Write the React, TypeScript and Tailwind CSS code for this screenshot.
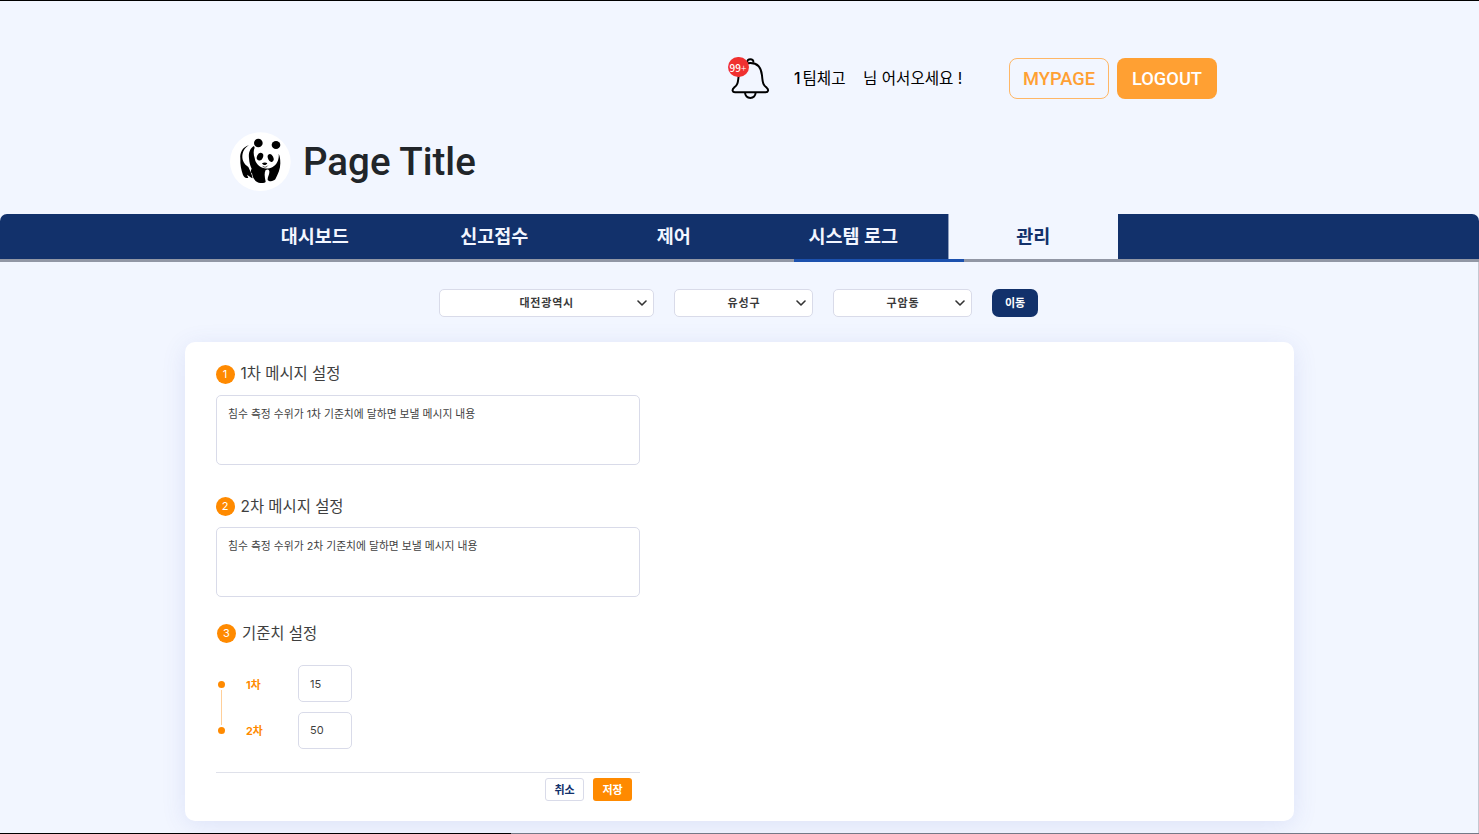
import type { ReactNode } from "react";

const KR = "font-[Inter,'Noto_Sans_CJK_KR',sans-serif]";

function Bell() {
  return (
    <div className="relative h-[44px] w-[42px]">
      <svg viewBox="84 48 126 132" className="h-[44px] w-[42px]" fill="none" stroke="#000" strokeWidth="5.8" strokeLinejoin="round">
        <path d="M142 68 C139 54 163 54 160 68" />
        <path d="M151 69 C174 69 184 85 186 106 C188 130 190 136 200 143 C207 149 205 157 197 157 H105 C97 157 95 149 102 143 C112 136 114 130 116 106 C118 85 128 69 151 69 Z" />
        <path d="M135 158 C137 179 165 179 167 158" />
      </svg>
      <span className="absolute left-0 top-px flex h-[20px] w-[21px] items-center justify-center rounded-full bg-[#f03030] font-['Noto_Sans_CJK_KR',sans-serif] text-[10px] leading-none text-white">
        <span className="relative right-[0.5px] top-px">
          <span className="font-medium">99</span>
          <span className="font-light">+</span>
        </span>
      </span>
    </div>
  );
}

function Panda() {
  return (
    <svg viewBox="30 30 186 186" className="h-[62px] w-[62px]">
      <ellipse cx="121" cy="125" rx="91" ry="88" fill="#fff" />
      <g fill="#000">
        <path d="M87 76 C68 81 59 98 61 116 C60 133 64 150 69 165 C73 174 80 175 85 174 L81 164 C87 167 93 173 98 175 C96 164 90 151 85 141 C78 137 68 128 67 112 C67 96 73 84 87 76 Z" />
        <path d="M102 78 C90 84 85 99 87 115 C88 130 91 138 95 146 C92 150 91 157 96 160 C98 172 103 184 116 188 C124 190 134 190 137 185 C134 172 132 160 137 150 C142 147 147 148 148 154 C149 164 142 171 143 180 C148 186 161 184 166 178 C174 162 181 148 181 130 C181 118 180 108 176 101 C178 118 171 134 158 141 C149 145 142 147 133 145 C118 142 106 130 104 114 C100 104 100 91 104 83 Z" />
        <ellipse cx="115" cy="69" rx="13" ry="13" />
        <ellipse cx="168" cy="75" rx="13" ry="12" />
        <ellipse cx="120" cy="110" rx="9" ry="12" transform="rotate(25 120 110)" />
        <ellipse cx="152" cy="114" rx="8" ry="12" transform="rotate(-25 152 114)" />
        <path d="M126 130 C131 127 138 127 142 130 C139 137 129 137 126 130 Z" />
      </g>
      <path d="M128 139 C134 143 140 142 143 137" stroke="#000" strokeWidth="2" fill="none" />
    </svg>
  );
}

function Select({ label, className }: { label: string; className: string }) {
  return (
    <div className={`flex h-[28px] items-center rounded-[5px] border border-[#d9dbe9] bg-white pr-[6.5px] ${className}`}>
      <span className="flex-1 pl-[17.5px] pt-px text-center text-[11px] font-bold tracking-[0.8px] text-[#3a3a3a]">{label}</span>
      <svg viewBox="0 0 10 6" className="h-[6px] w-[10px]" fill="none" stroke="#333" strokeWidth="1.6" strokeLinecap="round" strokeLinejoin="round">
        <path d="M1 1 L5 5 L9 1" />
      </svg>
    </div>
  );
}

function Heading({ n, children }: { n: number; children: ReactNode }) {
  return (
    <div className="flex h-[19px] items-center gap-[6px]">
      <span className="flex h-[19px] w-[19px] items-center justify-center rounded-full bg-[#ff8a00] text-[11px] leading-none text-white">{n}</span>
      <h2 className="whitespace-nowrap text-[15.4px] leading-[20px] text-[#3f3f3f]">{children}</h2>
    </div>
  );
}

function Message({ children }: { children: ReactNode }) {
  return (
    <div className="h-[70px] w-[424px] rounded-[5px] border border-[#d9dbe9] bg-white px-[11px] pt-[9px] text-[10.8px] leading-[19px] text-[#3f3f3f]">
      {children}
    </div>
  );
}

function Field({ children }: { children: ReactNode }) {
  return (
    <div className="flex h-[37px] w-[54px] items-center rounded-[5px] border border-[#d9dbe9] pl-[11px] pt-px text-[11px] text-[#3f3f3f]">
      {children}
    </div>
  );
}

function Tab({ label, active = false }: { label: string; active?: boolean }) {
  return (
    <a className={`flex h-[45px] w-[169.5px] items-center justify-center text-[18.5px] font-bold leading-none ${active ? "border-l border-l-[#8f9fbe] bg-[#f2f6ff] text-[#12316b]" : "text-[#f2f6ff]"}`}>
      {label}
    </a>
  );
}

export default function App() {
  return (
    <div className={`flex h-[834px] w-[1479px] flex-col overflow-hidden border-t border-t-black bg-[#f2f6ff] ${KR}`}>
      <header className="flex h-[213px] flex-col">
        <div className="flex h-[129px] items-start pl-[728px] pt-[55px]">
          <Bell />
          <p className="ml-[24px] mt-[11px] flex w-[215px] gap-[17px] whitespace-nowrap text-[15.6px] leading-[24px] text-black">
            <span className="w-[52px]"><span className="mr-[2px] font-medium">1</span>팀체고</span>
            <span>님 어서오세요 !</span>
          </p>
          <button className="mt-[2px] h-[41px] w-[100px] rounded-[8px] border border-[#ffb766] pt-px font-[Roboto,sans-serif] text-[18.3px] font-medium leading-none text-[#ffa033]">MYPAGE</button>
          <button className="ml-[8px] mt-[2px] h-[41px] w-[100px] rounded-[8px] bg-[#ffa033] pt-px font-[Roboto,sans-serif] text-[18.3px] font-medium leading-none text-white">LOGOUT</button>
        </div>
        <div className="flex h-[62px] items-center pl-[230px]">
          <Panda />
          <h1 className="ml-[11px] pt-[2px] font-[Roboto,sans-serif] text-[38.5px] font-medium leading-[60px] text-[#212529]">Page Title</h1>
        </div>
      </header>

      <nav className="flex h-[45px] shrink-0 gap-[10px] rounded-t-[7px] bg-[#12316b] pl-[230px]">
        <Tab label="대시보드" />
        <Tab label="신고접수" />
        <Tab label="제어" />
        <Tab label="시스템 로그" />
        <Tab label="관리" active />
      </nav>
      <div className="h-[3px] shrink-0 bg-[#9297a5] pl-[794px]">
        <div className="h-[3px] w-[170px] bg-[#1c51ae]" />
      </div>

      <div className="flex flex-1 border-r border-r-[#c5c8d2]">
        <main className="flex flex-col pl-[185px]">
          <div className="flex h-[80px] gap-[20px] pl-[253.5px] pt-[27px]">
            <Select label="대전광역시" className="w-[215.5px]" />
            <Select label="유성구" className="w-[139px]" />
            <Select label="구암동" className="w-[139px]" />
            <button className="h-[28px] w-[46px] rounded-[7px] bg-[#12316b] pt-px text-[11px] font-bold text-white">이동</button>
          </div>
          <section className="flex h-[479px] w-[1109px] flex-col rounded-[10px] bg-white pl-[31px] pt-[22px] shadow-[0_4px_24px_rgba(70,90,200,0.12)]">
            <div className="-ml-[0.5px] pt-[0.5px]">
              <Heading n={1}>1차 메시지 설정</Heading>
            </div>
            <div className="mt-[11px]">
              <Message>침수 측정 수위가 1차 기준치에 달하면 보낼 메시지 내용</Message>
            </div>
            <div className="-ml-[0.5px] mt-[32.5px]">
              <Heading n={2}>2차 메시지 설정</Heading>
            </div>
            <div className="mt-[11px]">
              <Message>침수 측정 수위가 2차 기준치에 달하면 보낼 메시지 내용</Message>
            </div>
            <div className="mt-[27px] pl-px">
              <Heading n={3}>기준치 설정</Heading>
            </div>
            <div className="mt-[22px] flex h-[84px]">
              <div className="flex w-[11px] flex-col items-center pt-[16px]">
                <i className="h-[7px] w-[7px] rounded-full bg-[#ff8a00]" />
                <i className="my-[2px] h-[35px] w-px bg-[#ffcf99]" />
                <i className="h-[7px] w-[7px] rounded-full bg-[#ff8a00]" />
              </div>
              <div className="flex w-[71px] flex-col gap-[26px] pl-[19px] pt-[10.5px] text-[10.8px] font-bold leading-[20px] text-[#ff8a00]">
                <span>1차</span>
                <span>2차</span>
              </div>
              <div className="flex flex-col gap-[9.5px]">
                <Field>15</Field>
                <Field>50</Field>
              </div>
            </div>
            <div className="mt-[23px] flex w-[424px] justify-end gap-[9px] border-t border-t-[#dfe1ea] pr-[8px] pt-[5px] text-[11px] font-bold">
              <button className="h-[23px] w-[39px] rounded-[3px] border border-[#d9dbe9] pt-px leading-none text-[#12316b]">취소</button>
              <button className="h-[23px] w-[39px] rounded-[3px] bg-[#ff8a00] pt-px leading-none text-white">저장</button>
            </div>
          </section>
        </main>
      </div>
      <div className="z-10 flex h-px shrink-0 bg-[#747987]">
        <div className="h-px w-[511px] bg-black" />
      </div>
    </div>
  );
}
